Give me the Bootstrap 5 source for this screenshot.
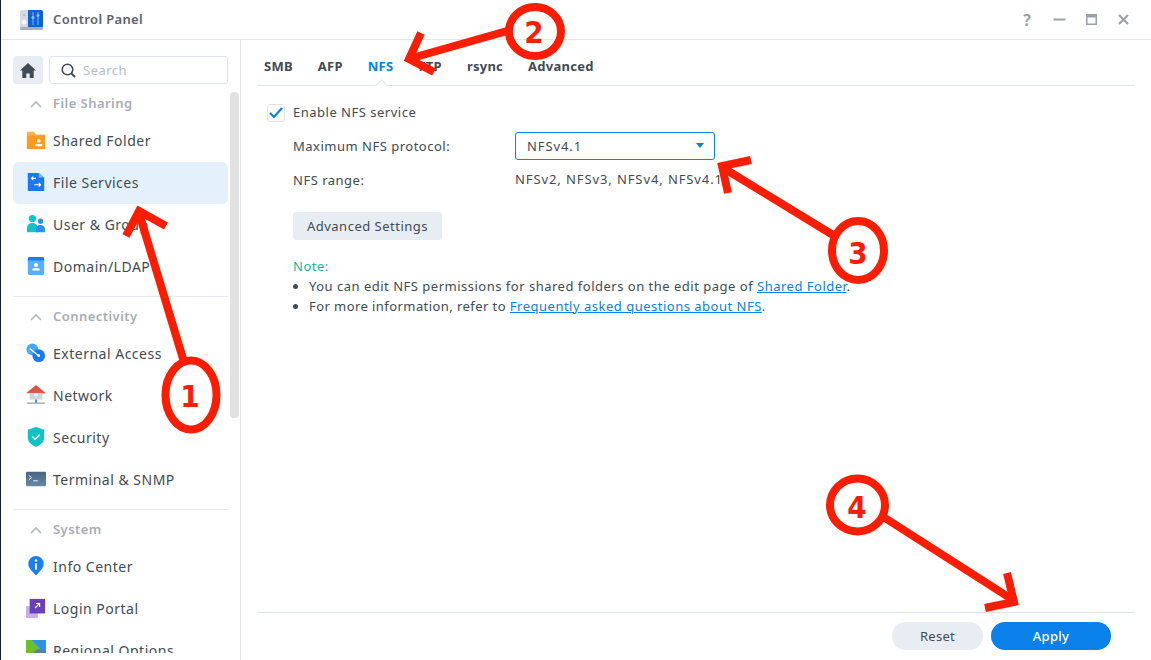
<!DOCTYPE html>
<html lang="en">

<head>
    <meta charset="UTF-8">
    <meta name="viewport" content="width=device-width, initial-scale=1">
    <title>Control Panel</title>
    <link href="https://cdn.jsdelivr.net/npm/bootstrap@5.3.3/dist/css/bootstrap.min.css" rel="stylesheet">
    <style>
        html, body { height: 100%; overflow: hidden; }
        body { font-family: "Noto Sans", "Open Sans", sans-serif; font-size: 13px; color: #414b55; background: #fff; }
        .dsm-win { position: relative; width: 1151px; height: 660px; border-left: 1px solid #10203a; overflow: hidden; }
        .dsm-title { height: 40px; border-bottom: 1px solid #e3e7ec; padding-left: 18px; padding-right: 12px; }
        .dsm-title-text { font-size: 13px; font-weight: 600; color: #5a6470; margin-left: 9px; letter-spacing: .35px; }
        .dsm-ctl { width: 32px; height: 30px; display: flex; align-items: center; justify-content: center; color: #9aa1aa; font-size: 16px; font-weight: 700; }
        .dsm-body { height: 620px; }
        .dsm-side { width: 239px; flex: none; height: 613px; overflow: hidden; position: relative; padding: 16px 12px 0 12px; }
        .dsm-sideline { width: 1px; background: #e3e7ec; flex: none; height: 620px; }
        .dsm-home { width: 30px; height: 28px; background: #e8edf3; border-radius: 3px; }
        .dsm-search { width: 179px; height: 28px; border: 1px solid #dfe4ea; border-radius: 3px; margin-left: 6px; padding-left: 11px; color: #b8bdc4; letter-spacing: .5px; }
        .dsm-search svg { margin-right: 7px; }
        .dsm-search span { padding-top: 2px; }
        .dsm-bar { position: absolute; left: 229px; top: 52px; width: 9px; height: 326px; background: #e2e2e2; border-radius: 4px; }
        .dsm-sect { height: 35px; padding-left: 17px; padding-top: 3px; font-weight: 600; color: #a8adb4; font-size: 13px; letter-spacing: .45px; }
        .dsm-sect svg { margin-right: 11px; }
        .dsm-item { height: 42px; width: 215px; padding-left: 13px; padding-bottom: 2px; border-radius: 6px; font-size: 14px; color: #414b55; letter-spacing: .5px; }
        .dsm-item svg { width: 20px; height: 20px; margin-right: 7px; flex: none; }
        .dsm-item.is-on { background: #e4f0fb; }
        .dsm-sep { width: 215px; height: 1px; background: #e6eaf0; margin-top: 8px; }
        .dsm-sect-first { height: 20px; padding-top: 0; margin-top: 10px; margin-bottom: 6px; }
        .dsm-sect-next { margin-top: 1px; }
        .dsm-main { padding-left: 16px; padding-right: 16px; min-width: 0; }
        .dsm-tabs { height: 46px; border-bottom: 1px solid #dfe4ea; padding-left: 7px; padding-top: 8px; position: relative; }
        .dsm-tab { font-weight: 700; font-size: 13px; color: #414b55; margin-right: 25px; letter-spacing: .25px; }
        .dsm-tab.is-on { color: #0a80ea; }
        .dsm-notch { position: absolute; left: 120px; bottom: -5px; width: 9px; height: 9px; background: #fff; border-left: 1px solid #dfe4ea; border-top: 1px solid #dfe4ea; transform: rotate(45deg); }
        .dsm-form { flex: 1 1 auto; padding-left: 10px; padding-top: 17px; letter-spacing: .5px; }
        .dsm-check { width: 18px; height: 18px; border: 1px solid #dfe4ea; border-radius: 3px; margin-right: 8px; }
        .dsm-row { padding-left: 26px; }
        .dsm-row-first { margin-top: 9px; }
        .dsm-row-range { margin-top: 9px; }
        .dsm-row-btn { margin-top: 22px; }
        .dsm-lbl { width: 222px; flex: none; padding-top: 2px; }
        .dsm-vers { letter-spacing: .9px; padding-top: 1px; }
        .dsm-select { width: 200px; height: 28px; border: 1px solid #0a80ea; border-radius: 3px; padding: 0 10px 0 11px; }
        .dsm-select .dsm-vers { padding-top: 2px; }
        .dsm-caret { width: 0; height: 0; border-left: 4px solid transparent; border-right: 4px solid transparent; border-top: 5px solid #0a80ea; }
        .dsm-btn { background: #e8edf3; border: 0; border-radius: 3px; height: 28px; width: 149px; color: #414b55; font-size: 13px; padding: 2px 0 0; letter-spacing: .5px; }
        .dsm-note { color: #16b5a2; line-height: 20px; }
        .dsm-notes { margin: 0; padding-left: 16px; line-height: 20px; }
        .dsm-notes li:last-child { letter-spacing: .43px; }
        .dsm-notes a { color: #0a80ea; letter-spacing: .5px; }
        .dsm-foot { height: 48px; border-top: 1px solid #dfe4ea; padding-top: 9px; padding-right: 24px; }
        .dsm-pill { height: 28px; border: 0; border-radius: 14px; font-size: 13px; padding: 2px 0 0; letter-spacing: .3px; }
        .dsm-reset { width: 91px; background: #e8edf3; color: #414b55; margin-right: 8px; }
        .dsm-apply { width: 120px; background: #0a80ea; color: #fff; font-weight: 500; }
        .dsm-marks { position: absolute; left: -1px; top: 0; pointer-events: none; }
        .dsm-num { font-family: "DejaVu Sans", sans-serif; font-stretch: condensed; font-weight: 700; font-size: 31px; fill: #fb1d00; text-anchor: middle; }
    </style>
</head>

<body>
    <div class="dsm-win">

        <!-- title bar -->
        <header class="dsm-title d-flex align-items-center">
            <svg width="25" height="24" viewBox="0 0 25 24">
                <rect x="1" y="2" width="23" height="20" rx="2" fill="#d5d9e2"/>
                <rect x="1" y="19" width="23" height="3" rx="1" fill="#aab0c0"/>
                <path d="M9 2h13a2 2 0 0 1 2 2v15H9z" fill="#0f63d6"/>
                <circle cx="5" cy="14" r="2.5" fill="#f4f6fa"/>
                <path d="M5 6v2M14 4v13M19 4v13" stroke="#7cb4f5" stroke-width="1"/>
                <rect x="12.5" y="8" width="3" height="3" rx="1.5" fill="#8cc0fa"/>
                <rect x="17.5" y="6" width="3" height="3" rx="1.5" fill="#8cc0fa"/>
            </svg>
            <span class="dsm-title-text">Control Panel</span>
            <div class="ms-auto d-flex">
                <span class="dsm-ctl">?</span>
                <span class="dsm-ctl"><svg width="13" height="13" viewBox="0 0 13 13"><rect x="0.5" y="5.5" width="12" height="2" fill="#9aa1aa"/></svg></span>
                <span class="dsm-ctl"><svg width="13" height="13" viewBox="0 0 13 13"><path d="M1 1h11v11H1z M2.5 4.5v6h8v-6z" fill="#9aa1aa" fill-rule="evenodd"/></svg></span>
                <span class="dsm-ctl"><svg width="13" height="13" viewBox="0 0 13 13"><path d="M2 2l9 9M11 2l-9 9" stroke="#9aa1aa" stroke-width="2.2"/></svg></span>
            </div>
        </header>

        <div class="dsm-body d-flex">
            <!-- sidebar -->
            <aside class="dsm-side">
                <div class="d-flex">
                    <div class="dsm-home d-flex align-items-center justify-content-center">
                        <svg width="16" height="15" viewBox="0 0 16 15"><path d="M8 0L0 7.5h2.3V15h4v-4.500h3.400V15h4V7.500H16z" fill="#414b55"/></svg>
                    </div>
                    <div class="dsm-search d-flex align-items-center">
                        <svg width="15" height="15" viewBox="0 0 15 15" fill="none" stroke="#414b55" stroke-width="1.600"><circle cx="6.500" cy="6.500" r="5.300"/><path d="M10.500 10.500L14 14" stroke-width="2"/></svg>
                        <span>Search</span>
                    </div>
                </div>

                <div class="dsm-sect dsm-sect-first d-flex align-items-center">
                    <svg width="12" height="8" viewBox="0 0 12 8" fill="none" stroke="#b3b8bf" stroke-width="1.600"><path d="M1 7l5-5 5 5"/></svg>File Sharing
                </div>
                <div class="dsm-item d-flex align-items-center">
                    <svg viewBox="0 0 22 22"><path d="M1 2h8l2 3h10v16H1z" fill="#fdb64e"/><path d="M1 6h20v15H1z" fill="#fd9a1f"/><circle cx="14" cy="12" r="2" fill="#fff"/><rect x="10" y="15.500" width="8" height="2.500" rx="1" fill="#fff"/></svg>
                    <span>Shared Folder</span>
                </div>
                <div class="dsm-item is-on d-flex align-items-center">
                    <svg viewBox="0 0 22 22"><path d="M2 1h12l6 5v15H2z" fill="#1a78f5"/><path d="M14 1l6 5h-6z" fill="#7cb6fb"/><path d="M11 7H6M8 5L6 7l2 2M9 14h7M14 12l2 2-2 2" stroke="#fff" stroke-width="1.300" fill="none"/></svg>
                    <span>File Services</span>
                </div>
                <div class="dsm-item d-flex align-items-center">
                    <svg viewBox="0 0 22 22"><circle cx="7" cy="5" r="4" fill="#10c4c9"/><path d="M1 20v-4c0-4 3-6 6-6s6 2 6 6v4z" fill="#10c4c9"/><circle cx="16" cy="8" r="3" fill="#2f8ff5"/><path d="M11 20v-3c0-3 2-5 5-5s5 2 5 5v3z" fill="#2f8ff5"/></svg>
                    <span>User &amp; Group</span>
                </div>
                <div class="dsm-item d-flex align-items-center">
                    <svg viewBox="0 0 22 22"><rect x="2" y="1" width="18" height="20" rx="2" fill="#5aaefb"/><path d="M2 3a2 2 0 0 1 2-2h14a2 2 0 0 1 2 2v2H2z" fill="#1f7cf0"/><circle cx="11" cy="10" r="2.200" fill="#fff"/><rect x="7" y="13.500" width="8" height="2.500" rx="1" fill="#fff"/></svg>
                    <span>Domain/LDAP</span>
                </div>
                <div class="dsm-sep"></div>

                <div class="dsm-sect dsm-sect-next d-flex align-items-center">
                    <svg width="12" height="8" viewBox="0 0 12 8" fill="none" stroke="#b3b8bf" stroke-width="1.600"><path d="M1 7l5-5 5 5"/></svg>Connectivity
                </div>
                <div class="dsm-item d-flex align-items-center">
                    <svg viewBox="0 0 22 22"><circle cx="7" cy="7" r="6.500" fill="#45a9fb"/><circle cx="14" cy="14" r="7" fill="#1a78f0"/><path d="M4 6l10 8" stroke="#fff" stroke-width="1.300"/><circle cx="14" cy="14" r="1.500" fill="#fff"/></svg>
                    <span>External Access</span>
                </div>
                <div class="dsm-item d-flex align-items-center">
                    <svg viewBox="0 0 22 22"><path d="M11 0L0 9h22z" fill="#d9574f"/><path d="M4 9h14v7H4z" fill="#cfd3da"/><circle cx="11" cy="11" r="2" fill="#eef0f4"/><path d="M11 16v4" stroke="#2f7ff0" stroke-width="2"/><path d="M1 20h20" stroke="#a9aeb6" stroke-width="1.600"/></svg>
                    <span>Network</span>
                </div>
                <div class="dsm-item d-flex align-items-center">
                    <svg viewBox="0 0 22 22"><path d="M11 0l9 3v9c0 5-5 8-9 10-4-2-9-5-9-10V3z" fill="#0fc3c4"/><path d="M7 10.500l3 3 5-5" stroke="#fff" stroke-width="1.700" fill="none"/></svg>
                    <span>Security</span>
                </div>
                <div class="dsm-item d-flex align-items-center">
                    <svg viewBox="0 0 22 22"><defs><linearGradient id="termBg" x1="0" y1="0" x2="0" y2="1"><stop offset="0" stop-color="#446583"/><stop offset="1" stop-color="#6a88a6"/></linearGradient></defs><rect x="0" y="3" width="22" height="16" rx="1.500" fill="url(#termBg)"/><path d="M3 7l3 2.500-3 2.500M8 13h5" stroke="#fff" stroke-width="1" fill="none"/></svg>
                    <span>Terminal &amp; SNMP</span>
                </div>
                <div class="dsm-sep"></div>

                <div class="dsm-sect dsm-sect-next d-flex align-items-center">
                    <svg width="12" height="8" viewBox="0 0 12 8" fill="none" stroke="#b3b8bf" stroke-width="1.600"><path d="M1 7l5-5 5 5"/></svg>System
                </div>
                <div class="dsm-item d-flex align-items-center">
                    <svg viewBox="0 0 22 22"><path d="M11 0a8.500 8.500 0 0 1 8.500 8.500c0 5-4.500 8-8.500 13-4-5-8.500-8-8.500-13A8.500 8.500 0 0 1 11 0z" fill="#1a7ff5"/><circle cx="11" cy="5" r="1.300" fill="#fff"/><rect x="10" y="8" width="2" height="7" fill="#fff"/></svg>
                    <span>Info Center</span>
                </div>
                <div class="dsm-item d-flex align-items-center">
                    <svg viewBox="0 0 22 22"><rect x="0" y="9" width="13" height="13" fill="#c7aeea"/><rect x="4" y="1" width="17" height="16" fill="#6a3fb8"/><path d="M10 11l5-5M11 6h4v4" stroke="#fff" stroke-width="1.200" fill="none"/></svg>
                    <span>Login Portal</span>
                </div>
                <div class="dsm-item d-flex align-items-center">
                    <svg viewBox="0 0 22 22"><path d="M0 0h22v22H0z" fill="#6bbf2f"/><path d="M6 0l16 16V0z" fill="#2f8ff5"/><circle cx="15" cy="17" r="7" fill="#5a7fa5"/></svg>
                    <span>Regional Options</span>
                </div>
                <div class="dsm-bar"></div>
            </aside>
            <div class="dsm-sideline"></div>

            <!-- content -->
            <main class="dsm-main d-flex flex-column flex-grow-1">
                <nav class="dsm-tabs d-flex align-items-center">
                    <span class="dsm-tab">SMB</span>
                    <span class="dsm-tab">AFP</span>
                    <span class="dsm-tab is-on">NFS</span>
                    <span class="dsm-tab">FTP</span>
                    <span class="dsm-tab">rsync</span>
                    <span class="dsm-tab">Advanced</span>
                    <span class="dsm-notch"></span>
                </nav>

                <div class="dsm-form">
                    <div class="d-flex align-items-center">
                        <span class="dsm-check d-flex align-items-center justify-content-center">
                            <svg width="14" height="12" viewBox="0 0 14 12" fill="none" stroke="#0a80ea" stroke-width="2.200"><path d="M1 6l4 4 8-9"/></svg>
                        </span>
                        <span>Enable NFS service</span>
                    </div>
                    <div class="dsm-row dsm-row-first d-flex align-items-center">
                        <span class="dsm-lbl">Maximum NFS protocol:</span>
                        <div class="dsm-select d-flex align-items-center justify-content-between">
                            <span class="dsm-vers">NFSv4.1</span><span class="dsm-caret"></span>
                        </div>
                    </div>
                    <div class="dsm-row dsm-row-range d-flex align-items-center">
                        <span class="dsm-lbl">NFS range:</span>
                        <span class="dsm-vers">NFSv2, NFSv3, NFSv4, NFSv4.1</span>
                    </div>
                    <div class="dsm-row dsm-row-btn">
                        <button type="button" class="dsm-btn">Advanced Settings</button>
                    </div>
                    <div class="dsm-row mt-3">
                        <div class="dsm-note">Note:</div>
                        <ul class="dsm-notes">
                            <li>You can edit NFS permissions for shared folders on the edit page of <a href="#">Shared Folder</a>.</li>
                            <li>For more information, refer to <a href="#">Frequently asked questions about NFS</a>.</li>
                        </ul>
                    </div>
                </div>

                <footer class="dsm-foot d-flex justify-content-end">
                    <button type="button" class="dsm-pill dsm-reset">Reset</button>
                    <button type="button" class="dsm-pill dsm-apply">Apply</button>
                </footer>
            </main>
        </div>

        <!-- red callouts drawn over the screenshot -->
        <svg class="dsm-marks" width="1151" height="660" viewBox="0 0 1151 660" fill="none" stroke="#fb1d00" stroke-width="8">
            <path d="M184 362L139 213"/>
            <path d="M126 236L139 211 166 226"/>
            <ellipse cx="191" cy="395" rx="25.500" ry="34.500"/>
            <text class="dsm-num" x="190" y="407" stroke="none">1</text>

            <path d="M507 31L412 58"/>
            <path d="M421 33L409 59 434 72"/>
            <ellipse cx="535" cy="31.500" rx="26" ry="24.500"/>
            <text class="dsm-num" x="534" y="43" stroke="none">2</text>

            <path d="M833 235L725 169"/>
            <path d="M751 160L722 166 728 193"/>
            <ellipse cx="858" cy="250.500" rx="26" ry="29.500"/>
            <text class="dsm-num" x="858" y="264" stroke="none">3</text>

            <path d="M885 518L1010 598"/>
            <path d="M1007 573L1014 602 985 608"/>
            <ellipse cx="857.500" cy="505" rx="27.500" ry="26.500"/>
            <text class="dsm-num" x="857" y="518" stroke="none">4</text>
        </svg>
    </div>

    <script src="https://cdn.jsdelivr.net/npm/bootstrap@5.3.3/dist/js/bootstrap.bundle.min.js"></script>
</body>

</html>
